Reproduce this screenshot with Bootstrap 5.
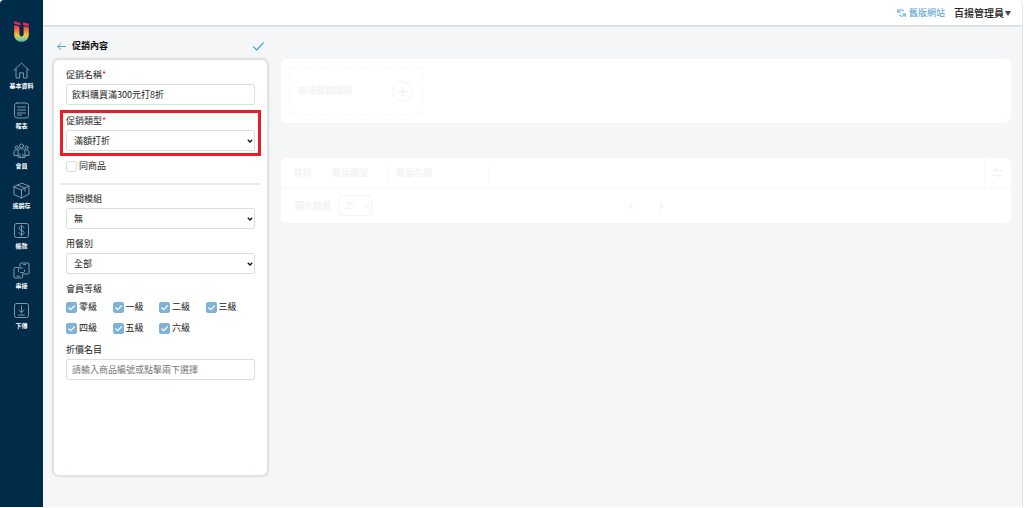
<!DOCTYPE html>
<html lang="zh-Hant">
<head>
<meta charset="utf-8">
<meta name="viewport" content="width=device-width, initial-scale=1">
<title>促銷內容</title>
<link href="https://cdn.jsdelivr.net/npm/bootstrap@5.3.0/dist/css/bootstrap.min.css" rel="stylesheet">
<style>
  :root { --navy: #002b49; --sky: #4fa0d0; --faint: #f2f3f5; --line: #dcdee0; }
  body { font-family: "Noto Sans CJK TC", "Noto Sans", sans-serif; font-size: 9px; line-height: 12px; color: #222; background: #fff; }
  svg { display: block; flex: none; fill: none; stroke: currentColor; stroke-linecap: round; stroke-linejoin: round; }
  svg.solid { stroke: none; }
  button { border: 0; background: none; padding: 0; color: inherit; font-weight: inherit; }
  .app-shell { min-height: calc(100vh - 1px); margin-right: 1px; border-right: 1px solid #e4e5e7; border-radius: 4px 5px 0 0; overflow: hidden; background: #f4f6f8; }
  .side-bar { width: 43px; flex: none; background: var(--navy); padding-top: 20px; }
  .side-item { color: #fff; font-size: 6px; line-height: 8px; font-weight: 700; height: 40px; text-decoration: none; gap: 3px; }
  .side-item svg { color: #8298a9; stroke-width: 1; }
  .brand { margin-bottom: 19px; }
  .top-bar { height: 25px; background: #fff; box-shadow: 0 1px 2px rgba(0,0,0,.16); padding-right: 11px; gap: 9px; }
  .top-bar a { color: var(--sky); gap: 3px; }
  .user-menu { font-size: 10px; line-height: 12px; font-weight: 500; gap: 1px; }
  .work-area { padding: 15px 11px 31px 10px; gap: 13px; }
  .edit-pane { width: 215px; flex: none; gap: 7px; }
  .pane-head { padding: 0 4px; color: var(--sky); }
  .pane-head h1 { font-size: 9px; line-height: 12px; font-weight: 700; color: #111; margin-left: 6px; }
  .form-panel { background: #fff; border: 1px solid #dfe0e2; border-radius: 6px; box-shadow: 0 0 3px rgba(0,0,0,.2); padding: 9px 12px; }
  .form-panel label, .form-panel legend { display: block; font-size: 9px; line-height: 12px; margin: 0; float: none; }
  .req { color: #f02020; }
  .field { margin-bottom: 9px; }
  .field .form-control, .field .form-select { margin-top: 3px; height: 21px; font-size: 9px; line-height: 12px; padding: 3px 5px; border: 1px solid var(--line); border-radius: 2px; color: #222; }
  .field .form-select { padding-left: 7px; background: #fff url("data:image/svg+xml,%3Csvg xmlns='http://www.w3.org/2000/svg' viewBox='0 0 6 4'%3E%3Cpath d='M.8.8 3 3 5.2.8' fill='none' stroke='%23111' stroke-width='1.3'/%3E%3C/svg%3E") no-repeat right 1px center / 6px 4px; }
  .field .form-control::placeholder { color: #777; }
  .marked { border: 3px solid #ed1c24; padding: 2px 3px; margin: -4px -6px 4px; }
  .form-panel .tick { display: flex; align-items: center; gap: 2px; }
  .tick .form-check-input { width: 11px; height: 11px; margin: 0; border: 1px solid #dcdee0; border-radius: 2px; flex: none; }
  .tick .form-check-input:checked { background: #7fb2d8 url("data:image/svg+xml,%3Csvg xmlns='http://www.w3.org/2000/svg' viewBox='0 0 9 9'%3E%3Cpath d='m1.500 4.500 2.200 2.200L7.700 2.500' fill='none' stroke='%23fff' stroke-width='1.200'/%3E%3C/svg%3E") center / 9px 9px no-repeat; border-color: #7fb2d8; }
  .rule { height: 2px; border: 0; background: #ebecee; opacity: 1; margin: 11px -6px 8px; }
  .levels { row-gap: 9px; margin: 6px 3px 10px 0; }
  .pale { background: #fff; border-radius: 6px; color: var(--faint); font-weight: 700; }
  .rule-card { padding: 8px; margin: 19px 0 35px; }
  .add-rule { width: 134px; height: 48px; border: 1px dashed #f5f6f7; padding: 0 9px 0 8px; }
  .goods { color: inherit; font-size: 9px; line-height: 12px; }
  .goods th { height: 30px; padding: 0 8px; vertical-align: middle; font-weight: 700; border-bottom: 1px solid #f7f7f8; }
  .goods th span { display: block; border-right: 1px solid #f7f7f8; margin-right: -8px; line-height: 16px; }
  .goods th:first-child { padding-left: 13px; }
  .goods th:last-child { border-left: 1px solid #f7f7f8; padding: 0 7px; }
  .pager { height: 34px; }
  .pager label { font-size: 9px; font-weight: 700; margin: 0 8px 0 14px; }
  .pager select { width: 33px; height: 21px; font-size: 9px; line-height: 12px; padding: 0 5px; color: var(--faint); border: 1px solid #f4f5f6; border-radius: 2px; background: #fff url("data:image/svg+xml,%3Csvg xmlns='http://www.w3.org/2000/svg' viewBox='0 0 6 4'%3E%3Cpath d='M.8.8 3 3 5.2.8' fill='none' stroke='%23eeeff1' stroke-width='1.3'/%3E%3C/svg%3E") no-repeat right 1px center / 6px 4px; }
  .pages { gap: 24px; }
</style>
</head>
<body>
<div class="app-shell d-flex">
  <nav class="side-bar d-flex flex-column" aria-label="主選單">
    <a href="#" class="brand d-flex justify-content-center" aria-label="首頁">
      <svg class="solid" width="17" height="23" viewBox="0 0 17 23">
        <defs><linearGradient id="flame" x1="0" y1="0" x2="0" y2="1"><stop offset="0" stop-color="#ec2f50"/><stop offset=".3" stop-color="#f4743b"/><stop offset=".6" stop-color="#efc545"/><stop offset=".85" stop-color="#8fc98a"/><stop offset="1" stop-color="#3fb6ad"/></linearGradient></defs>
        <path d="M1.200 5 6.400 6.500V14c0 3.200 4.200 3.200 4.200 0V6.300L15.800 7.500v6.900c0 9.800-14.600 9.800-14.600 0Z" fill="url(#flame)"/>
        <path d="M1.200 1 7.600 3v2.500L1.200 3.800ZM10 2.200l5.800 1.600v2.900L10 5.100Z" fill="#e9265a"/>
      </svg>
    </a>
    <a href="#" class="side-item d-flex flex-column align-items-center"><svg width="17" height="17" viewBox="0 0 17 17"><path d="M1 8.300 8.500 1 16 8.300M3 6.800V16h3.600v-5.200h3.800V16H14V6.800"/></svg>基本資料</a>
    <a href="#" class="side-item d-flex flex-column align-items-center"><svg width="17" height="17" viewBox="0 0 17 17"><rect x="1.500" y="1" width="14" height="15" rx="2.500"/><path d="M4.500 5h8M4.500 8h8M4.500 11h8M4.500 13h4"/></svg>報表</a>
    <a href="#" class="side-item d-flex flex-column align-items-center"><svg width="17" height="17" viewBox="0 0 17 17"><circle cx="8.500" cy="4" r="2"/><circle cx="3.500" cy="5.500" r="1.500"/><circle cx="13.500" cy="5.500" r="1.500"/><path d="M5 15V9c0-3 7-3 7 0v6ZM5 13.500H1V10c0-1.500 1-2.300 3.500-2.200M12 13.500h4V10c0-1.500-1-2.300-3.500-2.200M7 15v-3M10 15v-3"/></svg>會員</a>
    <a href="#" class="side-item d-flex flex-column align-items-center"><svg width="17" height="17" viewBox="0 0 17 17"><path d="m1 4.500 8-3.300 7 3-7.500 3.600ZM1 4.500v8l7.500 3.500V7.800M8.500 16l7.500-4V4.200M4.500 3l7.500 3.200v3"/></svg>進銷存</a>
    <a href="#" class="side-item d-flex flex-column align-items-center"><svg width="17" height="17" viewBox="0 0 17 17"><rect x="1.500" y="1.500" width="14" height="14" rx="2"/><path d="M11 6c-.3-2.400-5-2.300-5 .2 0 2.300 5.200 2 5.200 4.500 0 2.400-5.200 2.300-5.400-.2M8.500 3.200v10.600"/></svg>帳款</a>
    <a href="#" class="side-item d-flex flex-column align-items-center"><svg width="17" height="17" viewBox="0 0 17 17"><path d="M7 5V2c0-.6.400-1 1-1h7c.600 0 1 .4 1 1v9c0 .6-.4 1-1 1h-5M5.500 5.500H2c-.6 0-1 .4-1 1V15c0 .6.400 1 1 1h6.500c.600 0 1-.4 1-1v-3M10.500 2.500h2M4 14.200h2.500M5.500 9.500v-2c0-1 .5-1.500 1.500-1.500h2.500M11.500 8v1c0 1-.5 1.500-1.500 1.500H7.500"/></svg>串接</a>
    <a href="#" class="side-item d-flex flex-column align-items-center"><svg width="17" height="17" viewBox="0 0 17 17"><rect x="1.500" y="1.500" width="14" height="14" rx="2"/><path d="M8.500 4v6.500M5.800 8l2.700 2.700L11.200 8M5.500 13h6"/></svg>下傳</a>
  </nav>
  <div class="flex-grow-1 d-flex flex-column">
    <header class="top-bar d-flex align-items-center justify-content-end">
      <a href="#" class="d-flex align-items-center text-decoration-none"><svg width="9" height="10" viewBox="0 0 9 10"><path d="M.8 1.500V4h2.400M1 3.800C2 1.500 5 1.200 6.800 2.700M8.300 8.500V6H5.900M8.100 6.200C7.100 8.500 4 8.800 2.300 7.300"/></svg>舊版網站</a>
      <button type="button" class="user-menu d-flex align-items-center">百揚管理員<svg class="solid" width="6" height="6" viewBox="0 0 6 6"><path d="M0 1h6L3 6Z" fill="#444"/></svg></button>
    </header>
    <main class="work-area d-flex flex-grow-1">
      <form class="edit-pane d-flex flex-column" onsubmit="return false">
        <div class="pane-head d-flex align-items-center">
          <button type="button" aria-label="返回"><svg width="9" height="9" viewBox="0 0 9 9"><path d="M8.500 4.500H.8M3.800 1.500l-3 3 3 3"/></svg></button>
          <h1 class="mb-0 me-auto">促銷內容</h1>
          <button type="submit" aria-label="儲存"><svg width="11" height="9" viewBox="0 0 11 9" stroke-width="1.200"><path d="m.7 5 3 3L10.300.8"/></svg></button>
        </div>
        <div class="form-panel flex-grow-1">
          <div class="field">
            <label for="promo-name">促銷名稱<span class="req">*</span></label>
            <input id="promo-name" type="text" class="form-control" value="飲料購買滿300元打8折">
          </div>
          <div class="field marked">
            <label for="promo-type">促銷類型<span class="req">*</span></label>
            <select id="promo-type" class="form-select"><option>滿額打折</option></select>
          </div>
          <label class="tick"><input type="checkbox" class="form-check-input">同商品</label>
          <hr class="rule">
          <div class="field">
            <label for="time-set">時間模組</label>
            <select id="time-set" class="form-select"><option>無</option></select>
          </div>
          <div class="field">
            <label for="dining">用餐別</label>
            <select id="dining" class="form-select"><option>全部</option></select>
          </div>
          <fieldset>
            <legend>會員等級</legend>
            <div class="levels row gx-0">
              <div class="col-3"><label class="tick"><input type="checkbox" class="form-check-input" checked>零級</label></div>
              <div class="col-3"><label class="tick"><input type="checkbox" class="form-check-input" checked>一級</label></div>
              <div class="col-3"><label class="tick"><input type="checkbox" class="form-check-input" checked>二級</label></div>
              <div class="col-3"><label class="tick"><input type="checkbox" class="form-check-input" checked>三級</label></div>
              <div class="col-3"><label class="tick"><input type="checkbox" class="form-check-input" checked>四級</label></div>
              <div class="col-3"><label class="tick"><input type="checkbox" class="form-check-input" checked>五級</label></div>
              <div class="col-3"><label class="tick"><input type="checkbox" class="form-check-input" checked>六級</label></div>
            </div>
          </fieldset>
          <div class="field">
            <label for="discount-item">折價名目</label>
            <input id="discount-item" type="text" class="form-control" placeholder="請輸入商品編號或點擊兩下選擇">
          </div>
        </div>
      </form>
      <div class="flex-grow-1">
        <section class="pale rule-card">
          <button type="button" class="add-rule d-flex align-items-center justify-content-between">新增促銷規則<svg width="21" height="21" viewBox="0 0 21 21"><circle cx="10.500" cy="10.500" r="10"/><path d="M10.500 6v9M6 10.500h9" stroke-width="1.500"/></svg></button>
        </section>
        <section class="pale">
          <table class="goods w-100">
            <colgroup><col style="width:43px"><col style="width:64px"><col style="width:101px"><col><col style="width:27px"></colgroup>
            <thead><tr><th scope="col">移除</th><th scope="col"><span>商品編號</span></th><th scope="col"><span>商品名稱</span></th><th></th>
              <th><button type="button" class="d-block" aria-label="欄位設定"><svg width="11" height="10" viewBox="0 0 11 10"><path d="M.5 2.500h10M.5 7.500h10"/><circle cx="4" cy="2.500" r="1.300" fill="currentColor"/><circle cx="7" cy="7.500" r="1.300" fill="currentColor"/></svg></button></th></tr></thead>
          </table>
          <div class="pager row gx-0 align-items-center">
            <div class="col d-flex align-items-center"><label for="page-size">顯示數量</label><select id="page-size" class="form-select"><option>25</option></select></div>
            <div class="pages col-auto d-flex">
              <button type="button" aria-label="上一頁"><svg width="6" height="8" viewBox="0 0 6 8" stroke-width="1.500"><path d="M4.500 1 1.500 4l3 3"/></svg></button>
              <button type="button" aria-label="下一頁"><svg width="6" height="8" viewBox="0 0 6 8" stroke-width="1.500"><path d="m1.500 1 3 3-3 3"/></svg></button>
            </div>
            <div class="col"></div>
          </div>
        </section>
      </div>
    </main>
  </div>
</div>
<script src="https://cdn.jsdelivr.net/npm/bootstrap@5.3.0/dist/js/bootstrap.bundle.min.js"></script>
</body>
</html>
